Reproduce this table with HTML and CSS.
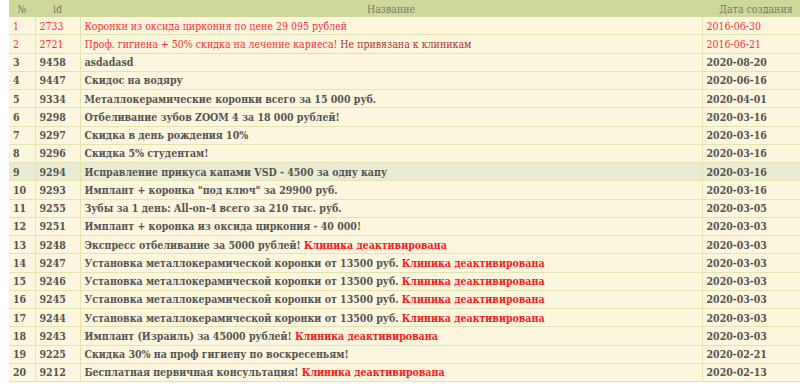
FILE: index.html
```html
<!DOCTYPE html>
<html lang="ru">
<head>
<meta charset="utf-8">
<link rel="stylesheet" href="styles.css">
</head>
<body>
<table class="list">
<thead>
<tr><th class="c-n">№</th><th class="c-id">id</th><th class="c-name">Название</th><th class="c-date">Дата создания</th></tr>
</thead>
<tbody>
<tr class="old"><td>1</td><td>2733</td><td>Коронки из оксида циркония по цене 29 095 рублей</td><td>2016-06-30</td></tr>
<tr class="old"><td>2</td><td>2721</td><td>Проф. гигиена + 50% скидка на лечение кариеса! <span class="nolink">Не привязана к клиникам</span></td><td>2016-06-21</td></tr>
<tr><td>3</td><td>9458</td><td>asdadasd</td><td>2020-08-20</td></tr>
<tr><td>4</td><td>9447</td><td>Скидос на водяру</td><td>2020-06-16</td></tr>
<tr><td>5</td><td>9334</td><td>Металлокерамические коронки всего за 15 000 руб.</td><td>2020-04-01</td></tr>
<tr><td>6</td><td>9298</td><td>Отбеливание зубов ZOOM 4 за 18 000 рублей!</td><td>2020-03-16</td></tr>
<tr><td>7</td><td>9297</td><td>Скидка в день рождения 10%</td><td>2020-03-16</td></tr>
<tr><td>8</td><td>9296</td><td>Скидка 5% студентам!</td><td>2020-03-16</td></tr>
<tr class="hl"><td>9</td><td>9294</td><td>Исправление прикуса капами VSD - 4500 за одну капу</td><td>2020-03-16</td></tr>
<tr><td>10</td><td>9293</td><td>Имплант + коронка "под ключ" за 29900 руб.</td><td>2020-03-16</td></tr>
<tr><td>11</td><td>9255</td><td>Зубы за 1 день: All-on-4 всего за 210 тыс. руб.</td><td>2020-03-05</td></tr>
<tr><td>12</td><td>9251</td><td>Имплант + коронка из оксида циркония - 40 000!</td><td>2020-03-03</td></tr>
<tr><td>13</td><td>9248</td><td>Экспресс отбеливание за 5000 рублей! <span class="off">Клиника деактивирована</span></td><td>2020-03-03</td></tr>
<tr><td>14</td><td>9247</td><td>Установка металлокерамической коронки от 13500 руб. <span class="off">Клиника деактивирована</span></td><td>2020-03-03</td></tr>
<tr><td>15</td><td>9246</td><td>Установка металлокерамической коронки от 13500 руб. <span class="off">Клиника деактивирована</span></td><td>2020-03-03</td></tr>
<tr><td>16</td><td>9245</td><td>Установка металлокерамической коронки от 13500 руб. <span class="off">Клиника деактивирована</span></td><td>2020-03-03</td></tr>
<tr><td>17</td><td>9244</td><td>Установка металлокерамической коронки от 13500 руб. <span class="off">Клиника деактивирована</span></td><td>2020-03-03</td></tr>
<tr><td>18</td><td>9243</td><td>Имплант (Израиль) за 45000 рублей! <span class="off">Клиника деактивирована</span></td><td>2020-03-03</td></tr>
<tr><td>19</td><td>9225</td><td>Скидка 30% на проф гигиену по воскресеньям!</td><td>2020-02-21</td></tr>
<tr><td>20</td><td>9212</td><td>Бесплатная первичная консультация! <span class="off">Клиника деактивирована</span></td><td>2020-02-13</td></tr>
</tbody>
</table>
</body>
</html>
```

FILE: styles.css
```css
html, body {
  margin: 0;
  padding: 0;
  background: #ffffff;
}
body {
  padding-left: 9px;
  font-family: "DejaVu Serif Condensed", "DejaVu Serif", serif;
  font-size: 10.5px;
}
.list {
  width: 100%;
  border-collapse: collapse;
  background: #fcf6de;
}
.list th {
  background: #cfd89b;
  color: #787868;
  font-weight: normal;
  text-align: center;
  height: 17px;
  padding: 0 4px;
  line-height: 12px;
  white-space: nowrap;
}
.list th.c-date {
  padding-left: 12px;
  padding-right: 2px;
}
.list td {
  border: 1px solid #e4e4b2;
  border-top: 0;
  padding: 2px 4px;
  height: 13.25px;
  line-height: 12px;
  color: #555555;
  font-weight: bold;
  text-align: left;
  white-space: nowrap;
}
.list tr td:first-child { border-left: 0; }
.list tr td:last-child { border-right: 0; }
.c-n { width: 18px; }
.c-id { width: 37px; }
.c-date { width: 84px; }
.list tr.old td {
  color: #ff3333;
  font-weight: normal;
}
.list tr.old .nolink { color: #b03030; }
.list tr.hl td { background: #e9ecd2; }
.off {
  color: #ff1a1a;
}
```
